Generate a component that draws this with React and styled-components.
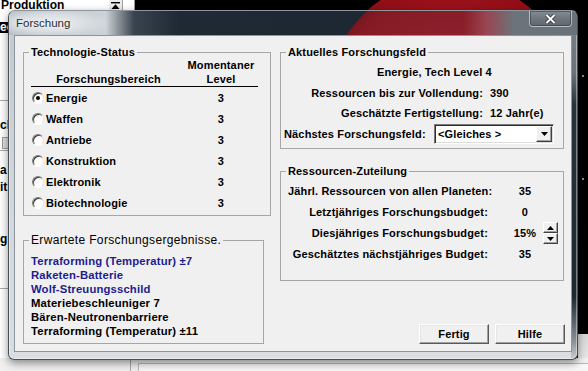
import React from "react";
import styled, { createGlobalStyle } from "styled-components";

const GlobalStyle = createGlobalStyle`
  html, body { margin: 0; padding: 0; background: #000; }
  body { font-family: "Liberation Sans", Arial, sans-serif; }
`;

const Desktop = styled.div`
  position: relative;
  width: 588px;
  height: 371px;
  overflow: hidden;
  background: #000;
`;

const Planet = styled.div`
  position: absolute;
  left: 325px;
  top: -21px;
  width: 250px;
  height: 250px;
  border-radius: 50%;
  background: radial-gradient(circle at 50% 30%, #a4141e 0%, #8c0c14 55%, #6e070d 100%);
`;

const ProdWindow = styled.div`
  position: absolute;
  left: 0;
  top: 0;
  width: 134px;
  height: 362px;
  background: #fff;
  border-right: 1px solid #9a9a9a;
  font-weight: bold;
  font-size: 12px;
`;

const ProdHeader = styled.div`
  display: flex;
  height: 10px;
  align-items: center;
`;

const ProdTitle = styled.div`
  flex: 1;
  line-height: 12px;
  margin-top: -1px;
  color: #000;
  padding-left: 1px;
`;

const ScrollTopButton = styled.div`
  width: 15px;
  height: 10px;
  box-sizing: border-box;
  display: flex;
  align-items: center;
  justify-content: center;
  background: #ececec;
  border-right: 1px solid #a0a0a0;
  border-left: 1px solid #fff;
  margin-right: 11px;
`;

const ProdList = styled.div`
  display: flex;
  flex-direction: column;
`;

const ProdItem = styled.div`
  margin-top: ${(p) => p.$mt}px;
  height: ${(p) => p.$h || 12}px;
  line-height: ${(p) => p.$h || 12}px;
  background: ${(p) => (p.$selected ? "#000" : "transparent")};
  color: ${(p) => (p.$selected ? "#fff" : "#000")};
`;

const ProdRule = styled.div`
  margin-top: ${(p) => p.$mt}px;
  height: 1px;
  background: #a8a8a8;
`;

const ProdBox = styled.div`
  margin: ${(p) => p.$mt}px 0 0 2px;
  width: 10px;
  height: 10px;
  background: #dedede;
  border: 1px solid #9c9c9c;
`;

const RightPanel = styled.div`
  position: absolute;
  left: 578px;
  top: 334px;
  width: 10px;
  height: 37px;
  background: linear-gradient(180deg, #d8d8d8, #efefef);
`;

const Dot = styled.div`
  position: absolute;
  left: 582px;
  top: ${(p) => p.$top}px;
  width: 2px;
  height: 2px;
  background: #8a8a8a;
`;

const BottomStrip = styled.div`
  position: absolute;
  left: 0;
  top: 358px;
  width: 588px;
  height: 13px;
  display: flex;
  background: #f0f0f0;
`;

const BottomCell = styled.div`
  width: 130px;
  border-right: 1px solid #a9a9a9;
`;

const BottomPanel = styled.div`
  flex: 1;
  margin: 5px 0 0 7px;
  border-top: 1px solid #b9b9b9;
  border-left: 1px solid #b9b9b9;
  background: #f7f7f7;
`;

const Dialog = styled.div`
  position: absolute;
  left: 8px;
  top: 10px;
  width: 570px;
  height: 350px;
  box-sizing: border-box;
  display: flex;
  flex-direction: column;
  padding: 0 5px 7px 5px;
  border: 1px solid #474e55;
  border-top-color: #8e979e;
  border-radius: 7px 7px 6px 6px;
  box-shadow: 0 3px 8px rgba(0, 0, 0, 0.45), inset 0 0 0 1px rgba(255, 255, 255, 0.4);
  background:
    linear-gradient(180deg, #7a828a 0%, #6b737a 18%, #26323c 27%, #1c2731 82%, #8b9399 95%, #c8cdd1 100%) right top / 6px 100% no-repeat,
    linear-gradient(180deg, #c2c8cd 0%, #d2d7db 55%, #dadee1 100%);
`;

const TitleBar = styled.div`
  height: 24px;
  margin: 0 -5px;
  padding-left: 7px;
  display: flex;
  justify-content: space-between;
  border-radius: 6px 6px 0 0;
  background:
    radial-gradient(ellipse 62px 15px at 40px 12px, rgba(238, 241, 243, 0.95) 0%, rgba(225, 229, 232, 0.8) 55%, rgba(220, 224, 228, 0) 100%),
    linear-gradient(90deg, rgba(0, 0, 0, 0) 0%, rgba(0, 0, 0, 0) 80%, rgba(165, 95, 108, 0.6) 84%, #6c747b 89%, #6a7279 100%),
    radial-gradient(circle 125px at 441px 93px, #8f2a36 0%, #861a24 90%, #7a1620 99%, rgba(0, 0, 0, 0) 100%),
    linear-gradient(90deg, #b5bcc2 0%, #cdd3d7 17%, #3a444e 22%, #1e2933 30%, #1b2631 100%);
`;

const TitleText = styled.div`
  align-self: center;
  font-size: 11.5px;
  color: #2a2e33;
  text-shadow: 0 0 6px rgba(255, 255, 255, 0.9);
`;

const CloseButton = styled.div`
  width: 43px;
  height: 16px;
  margin-right: 5px;
  box-sizing: border-box;
  display: flex;
  align-items: center;
  justify-content: center;
  border: 1px solid rgba(210, 216, 220, 0.7);
  border-top: none;
  border-radius: 0 0 4px 4px;
  background: linear-gradient(180deg, #858d94 0%, #6f777e 50%, #60686f 100%);
  box-shadow: inset 0 0 0 1px rgba(40, 46, 52, 0.5);
`;

const Client = styled.div`
  flex: 1;
  box-sizing: border-box;
  border: 1px solid #8c959b;
  background: #f0f0f0;
  padding: 16px 7px 0 8px;
  display: grid;
  grid-template-columns: 248px 284px;
  column-gap: 9px;
  align-items: start;
  font-size: 11px;
  font-weight: bold;
  letter-spacing: 0.15px;
  color: #000;
`;

const Column = styled.div`
  display: flex;
  flex-direction: column;
`;

const GroupBox = styled.div`
  position: relative;
  box-sizing: border-box;
  width: ${(p) => p.$w}px;
  height: ${(p) => p.$h}px;
  margin-top: ${(p) => p.$mt || 0}px;
  border: 1px solid #a6a6a6;
`;

const Legend = styled.span`
  position: absolute;
  top: -8px;
  left: 5px;
  padding: 0 2px;
  line-height: 14px;
  background: #f0f0f0;
  font-weight: ${(p) => (p.$light ? "normal" : "bold")};
  font-size: ${(p) => (p.$light ? "12px" : "11px")};
  letter-spacing: ${(p) => (p.$light ? "0.35px" : "0.15px")};
  white-space: nowrap;
`;

const StatusTable = styled.div`
  padding: 5px 12px 0 7px;
`;

const StatusGrid = styled.div`
  display: grid;
  grid-template-columns: 155px 70px;
  align-items: ${(p) => (p.$head ? "end" : "center")};
  height: ${(p) => (p.$head ? "28px" : "21px")};
  line-height: 14px;
  border-bottom: ${(p) => (p.$head ? "1px solid #000" : "none")};
  text-align: center;
`;

const AreaCell = styled.div`
  display: flex;
  align-items: center;
  gap: 2px;
  padding-left: 1px;
  text-align: left;
`;

const Radio = styled.span`
  position: relative;
  width: 12px;
  height: 12px;
  box-sizing: border-box;
  border-radius: 50%;
  border: 1px solid;
  border-color: #7a7a7a #e4e4e4 #ffffff #7a7a7a;
  background: #fff;
  box-shadow: inset 1px 1px 0 #3c3c3c;
  &::after {
    content: "";
    display: ${(p) => (p.$checked ? "block" : "none")};
    position: absolute;
    left: 3px;
    top: 3px;
    width: 4px;
    height: 4px;
    border-radius: 50%;
    background: #000;
  }
`;

const Results = styled.div`
  padding: 13px 0 0 7px;
  line-height: 14px;
  font-size: 11.3px;
`;

const ResultLine = styled.div`
  color: ${(p) => (p.$planned ? "#1d1d8f" : "#000")};
  white-space: nowrap;
`;

const FieldRows = styled.div`
  padding-top: ${(p) => p.$pt}px;
`;

const InfoRow = styled.div`
  display: grid;
  grid-template-columns: ${(p) => p.$cols};
  align-items: center;
  height: ${(p) => p.$h}px;
  white-space: nowrap;
`;

const Label = styled.div`
  text-align: ${(p) => p.$align || "right"};
  padding-left: ${(p) => p.$pl || 0}px;
`;

const Value = styled.div`
  text-align: ${(p) => p.$align || "left"};
  padding-left: ${(p) => p.$pl || 0}px;
`;

const Select = styled.div`
  width: 120px;
  height: 20px;
  box-sizing: border-box;
  display: flex;
  align-items: center;
  justify-content: space-between;
  padding: 0 1px 0 3px;
  background: #fff;
  border: 1px solid;
  border-color: #7a7a7a #ffffff #ffffff #7a7a7a;
  box-shadow: inset 1px 1px 0 #2e2e2e, inset -1px -1px 0 #dcdcdc;
`;

const SelectButton = styled.div`
  width: 16px;
  height: 16px;
  box-sizing: border-box;
  display: flex;
  align-items: center;
  justify-content: center;
  background: #f0f0f0;
  border: 1px solid;
  border-color: #ffffff #404040 #404040 #ffffff;
  box-shadow: inset -1px -1px 0 #a0a0a0;
`;

const Spinner = styled.div`
  display: flex;
  flex-direction: column;
  margin-left: 1px;
`;

const SpinButton = styled.div`
  width: 15px;
  height: 11px;
  box-sizing: border-box;
  display: flex;
  align-items: center;
  justify-content: center;
  background: #f0f0f0;
  border: 1px solid;
  border-color: #ffffff #404040 #404040 #ffffff;
  box-shadow: inset -1px -1px 0 #a0a0a0;
`;

const ButtonRow = styled.div`
  display: flex;
  justify-content: flex-end;
  gap: 6px;
  margin: 43px -1px 0 0;
`;

const Button = styled.div`
  width: 70px;
  height: 20px;
  box-sizing: border-box;
  display: flex;
  align-items: center;
  justify-content: center;
  background: #f0f0f0;
  border: 1px solid;
  border-color: #ffffff #5a5a5a #5a5a5a #ffffff;
  box-shadow: inset -1px -1px 0 #a0a0a0, inset 1px 1px 0 #e6e6e6;
`;

const Triangle = ({ up }) => (
  <svg width="7" height="4" viewBox="0 0 7 4">
    <path d={up ? "M3.5 0 L7 4 L0 4 Z" : "M0 0 L7 0 L3.5 4 Z"} fill="#000" />
  </svg>
);

const areas = ["Energie", "Waffen", "Antriebe", "Konstruktion", "Elektronik", "Biotechnologie"];

const results = [
  { text: "Terraforming (Temperatur) ±7", planned: true },
  { text: "Raketen-Batterie", planned: true },
  { text: "Wolf-Streuungsschild", planned: true },
  { text: "Materiebeschleuniger 7" },
  { text: "Bären-Neutronenbarriere" },
  { text: "Terraforming (Temperatur) ±11" },
];

export default function App() {
  return (
    <>
      <GlobalStyle />
      <Desktop>
        <Planet />
        <ProdWindow>
          <ProdHeader>
            <ProdTitle>Produktion</ProdTitle>
            <ScrollTopButton>
              <svg width="9" height="7" viewBox="0 0 9 7">
                <rect x="0" y="0" width="9" height="1.4" fill="#000" />
                <path d="M4.5 2.2 L8.5 7 L0.5 7 Z" fill="#000" />
              </svg>
            </ScrollTopButton>
          </ProdHeader>
          <ProdList>
            <ProdItem $mt={12} $h={11} $selected>ee</ProdItem>
            <ProdRule $mt={67} />
            <ProdItem $mt={18}>ch</ProdItem>
            <ProdBox $mt={6} />
            <ProdRule $mt={1} />
            <ProdItem $mt={13}>a</ProdItem>
            <ProdItem $mt={5}>it</ProdItem>
            <ProdItem $mt={40}>g</ProdItem>
            <ProdRule $mt={43} />
          </ProdList>
        </ProdWindow>
        <RightPanel />
        <Dot $top={75} />
        <Dot $top={178} />
        <BottomStrip>
          <BottomCell />
          <BottomPanel />
        </BottomStrip>

        <Dialog>
          <TitleBar>
            <TitleText>Forschung</TitleText>
            <CloseButton>
              <svg width="11" height="10" viewBox="0 0 11 10">
                <path d="M1.5 1 L9.5 9 M9.5 1 L1.5 9" stroke="#2a3036" strokeWidth="3.6" />
                <path d="M1.5 1 L9.5 9 M9.5 1 L1.5 9" stroke="#fff" strokeWidth="2" />
              </svg>
            </CloseButton>
          </TitleBar>

          <Client>
            <Column>
              <GroupBox $w={248} $h={164}>
                <Legend>Technologie-Status</Legend>
                <StatusTable>
                  <StatusGrid $head>
                    <div>Forschungsbereich</div>
                    <div>
                      Momentaner
                      <br />
                      Level
                    </div>
                  </StatusGrid>
                  {areas.map((area, i) => (
                    <StatusGrid key={area}>
                      <AreaCell>
                        <Radio $checked={i === 0} />
                        {area}
                      </AreaCell>
                      <div>3</div>
                    </StatusGrid>
                  ))}
                </StatusTable>
              </GroupBox>

              <GroupBox $w={241} $h={104} $mt={24}>
                <Legend $light>Erwartete Forschungsergebnisse.</Legend>
                <Results>
                  {results.map((r, i) => (
                    <ResultLine key={i} $planned={r.planned}>
                      {r.text}
                    </ResultLine>
                  ))}
                </Results>
              </GroupBox>
            </Column>

            <Column>
              <GroupBox $w={284} $h={97}>
                <Legend>Aktuelles Forschungsfeld</Legend>
                <FieldRows $pt={9}>
                  <InfoRow $cols="1fr" $h={20.5}>
                    <Label $align="left" $pl={96}>Energie, Tech Level 4</Label>
                  </InfoRow>
                  <InfoRow $cols="202px 1fr" $h={20.5}>
                    <Label>Ressourcen bis zur Vollendung:</Label>
                    <Value $pl={7}>390</Value>
                  </InfoRow>
                  <InfoRow $cols="202px 1fr" $h={20.5}>
                    <Label>Geschätzte Fertigstellung:</Label>
                    <Value $pl={7}>12 Jahr(e)</Value>
                  </InfoRow>
                  <InfoRow $cols="153px 120px" $h={20.5}>
                    <Label $align="left" $pl={3}>Nächstes Forschungsfeld:</Label>
                    <Select>
                      <span>&lt;Gleiches &gt;</span>
                      <SelectButton>
                        <Triangle />
                      </SelectButton>
                    </Select>
                  </InfoRow>
                </FieldRows>
              </GroupBox>

              <GroupBox $w={284} $h={110} $mt={22}>
                <Legend>Ressourcen-Zuteilung</Legend>
                <FieldRows $pt={8}>
                  <InfoRow $cols="207px 20px 34px 16px" $h={21}>
                    <Label $align="left" $pl={7}>Jährl. Ressourcen von allen Planeten:</Label>
                    <span />
                    <Value $align="center">35</Value>
                  </InfoRow>
                  <InfoRow $cols="207px 20px 34px 16px" $h={21}>
                    <Label>Letztjähriges Forschungsbudget:</Label>
                    <span />
                    <Value $align="center">0</Value>
                  </InfoRow>
                  <InfoRow $cols="207px 20px 34px 16px" $h={21}>
                    <Label>Diesjähriges Forschungsbudget:</Label>
                    <span />
                    <Value $align="center">15%</Value>
                    <Spinner>
                      <SpinButton>
                        <Triangle up />
                      </SpinButton>
                      <SpinButton>
                        <Triangle />
                      </SpinButton>
                    </Spinner>
                  </InfoRow>
                  <InfoRow $cols="207px 20px 34px 16px" $h={21}>
                    <Label>Geschätztes nächstjähriges Budget:</Label>
                    <span />
                    <Value $align="center">35</Value>
                  </InfoRow>
                </FieldRows>
              </GroupBox>

              <ButtonRow>
                <Button>Fertig</Button>
                <Button>Hilfe</Button>
              </ButtonRow>
            </Column>
          </Client>
        </Dialog>
      </Desktop>
    </>
  );
}
